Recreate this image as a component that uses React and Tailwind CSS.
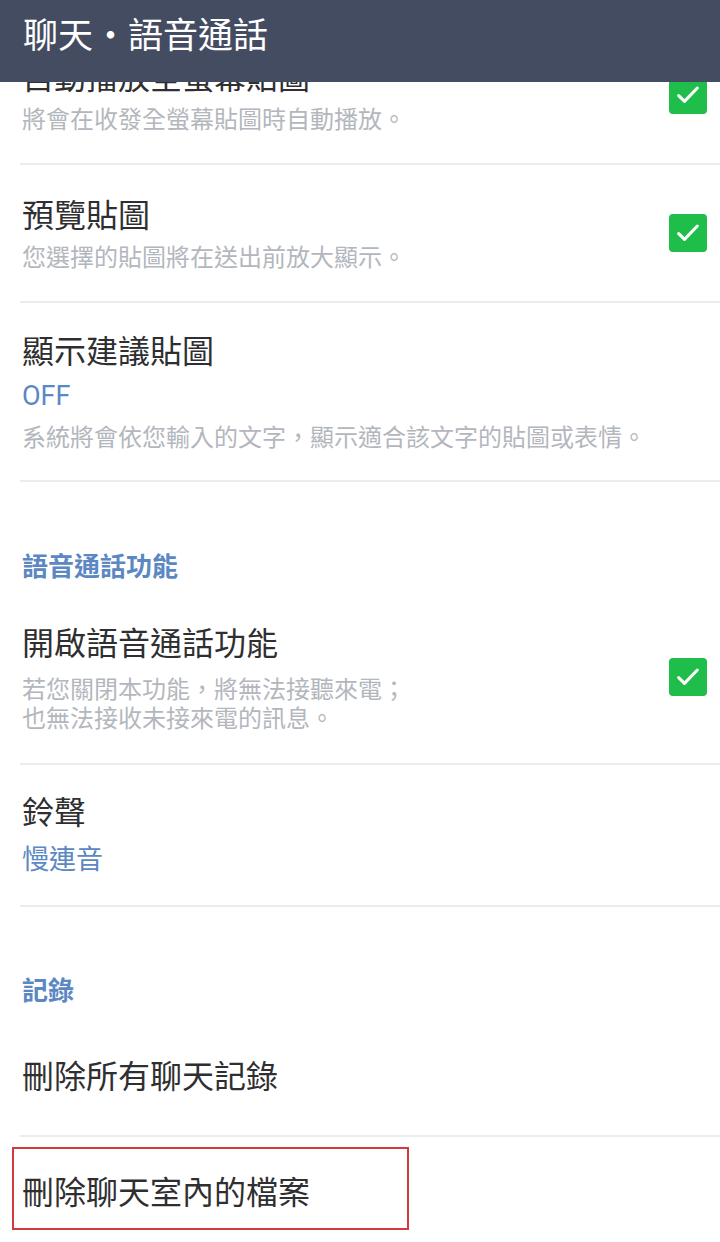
const font = { fontFamily: '"Noto Sans CJK TC", "Noto Sans", sans-serif' }

const Check = () => (
  <div className="w-[38px] h-[38px] rounded-[4px] bg-[#1fbe4a] flex items-center justify-center shrink-0">
    <svg className="w-[28px] h-[28px]" viewBox="0 0 24 24" fill="none" stroke="#fff" strokeWidth={2.6} strokeLinecap="round" strokeLinejoin="round">
      <path d="M4 12.5l5 5L20 6" />
    </svg>
  </div>
)

const Row = ({ title, value, desc, checked, className = '', gap = 'gap-[10px]', valueClass = '', children }) => (
  <div className={`relative flex items-center pl-[22px] pr-[13px] ${className}`}>
    <div className={`flex-1 flex flex-col ${gap}`}>
      <div className="text-[32px] leading-[36px] text-[#2f2f31]">{title}</div>
      {value && (
        <div
          className={`text-[27px] leading-[32px] text-[#5b87c3] ${valueClass}`}
          style={{ fontFamily: 'Roboto, "Noto Sans CJK TC", sans-serif' }}
        >
          {value}
        </div>
      )}
      {desc && <div className="text-[24px] leading-[29px] text-[#b3b7bd]">{desc}</div>}
    </div>
    {checked && <Check />}
    {children}
  </div>
)

const Divider = () => <div className="ml-[20px] h-[2px] bg-[#ececee]" />

const Section = ({ label, className = '' }) => (
  <div className={`h-[114px] pl-[22px] ${className}`}>
    <div className="text-[26px] leading-[30px] font-bold text-[#5b87c3]">{label}</div>
  </div>
)

export default function App() {
  return (
    <div className="w-[720px] h-[1242px] overflow-hidden bg-white" style={font}>
      <div className="relative z-10 h-[82px] bg-[#444c62] pl-[23px] pt-[12px]">
        <h1 className="text-[35px] leading-[42px] text-white">聊天・語音通話</h1>
      </div>

      <div className="-mt-[55px]">
        <Row title="自動播放全螢幕貼圖" desc="將會在收發全螢幕貼圖時自動播放。" checked className="pt-[30px] pb-[31px]" />
        <Divider />
        <Row title="預覽貼圖" desc="您選擇的貼圖將在送出前放大顯示。" checked className="pt-[30px] pb-[31px]" />
        <Divider />
        <Row
          title="顯示建議貼圖"
          value="OFF"
          desc="系統將會依您輸入的文字，顯示適合該文字的貼圖或表情。"
          gap="gap-[11px]"
          valueClass="mt-[2px] -mb-[2px]"
          className="pt-[28px] pb-[30px]"
        />
        <Divider />

        <Section label="語音通話功能" className="pt-[68px]" />
        <Row
          title="開啟語音通話功能"
          desc={<>若您關閉本功能，將無法接聽來電；<br />也無法接收未接來電的訊息。</>}
          checked
          gap="gap-[14px]"
          className="pt-[27px] pb-[32px]"
        />
        <Divider />
        <Row title="鈴聲" value="慢連音" gap="gap-[16px]" className="pt-[27px] pb-[29px]" />
        <Divider />

        <Section label="記錄" className="pt-[67px]" />
        <Row title="刪除所有聊天記錄" className="pt-[35px] pb-[43px]" />
        <Divider />
        <Row title="刪除聊天室內的檔案" className="pt-[35px] pb-[43px]">
          {/* 標示框 */}
          <div className="absolute left-[12px] top-[10px] w-[397px] h-[83px] border-2 border-[#d23a40]" />
        </Row>
      </div>
    </div>
  )
}
